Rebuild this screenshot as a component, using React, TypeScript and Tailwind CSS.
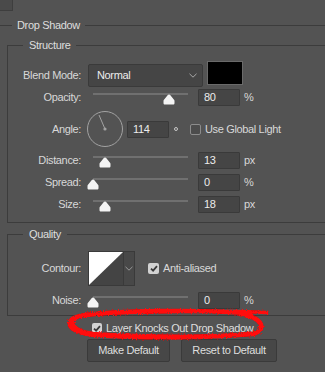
import React from 'react';

const LINE = 'border-[#3c3c3c]';

function Label({ children }: { children: React.ReactNode }) {
  return <div className="w-[73px] shrink-0 text-right text-[#d8d8d8]">{children}</div>;
}

function Slider({ pct }: { pct: number }) {
  // track runs 95px wide, thumb is 12px wide
  const left = 5 + (pct / 100) * 95 - 6;
  return (
    <div className="relative ml-[7px] h-full w-[105px] shrink-0">
      <div className="ml-[5px] mt-[7px] h-[2px] w-[95px] bg-[#707070]" />
      <svg
        className="absolute top-[8px]"
        style={{ left }}
        width="12"
        height="11"
        viewBox="0 0 12 11"
      >
        <path
          d="M6 0.5 C6.6 0.5 7 0.8 7.4 1.3 L11.2 6 C11.5 6.4 11.5 6.8 11.5 7.2 L11.5 9 C11.5 10 11 10.5 10 10.5 L2 10.5 C1 10.5 0.5 10 0.5 9 L0.5 7.2 C0.5 6.8 0.5 6.4 0.8 6 L4.6 1.3 C5 0.8 5.4 0.5 6 0.5 Z"
          fill="#f4f4f4"
        />
      </svg>
    </div>
  );
}

function NumBox({ value, className = '' }: { value: string; className?: string }) {
  return (
    <div
      className={`flex h-[17px] w-[42px] shrink-0 items-center rounded-[1px] border border-[#3a3a3a] bg-[#454545] pl-[5px] text-[#ececec] ${className}`}
    >
      {value}
    </div>
  );
}

function SliderRow({ label, pct, value, unit }: { label: string; pct: number; value: string; unit: string }) {
  return (
    <div className="flex h-[22px] items-center">
      <Label>{label}</Label>
      <Slider pct={pct} />
      <NumBox value={value} className="ml-[5px]" />
      <div className="ml-[4px] text-[#d8d8d8]">{unit}</div>
    </div>
  );
}

function Check({ checked, size = 10 }: { checked?: boolean; size?: number }) {
  if (checked) {
    return (
      <div
        className="flex shrink-0 items-center justify-center rounded-[2px] bg-[#d2d2d2]"
        style={{ width: size, height: size }}
      >
        <svg width="8" height="7" viewBox="0 0 8 7">
          <path d="M1 3.6 L3.1 5.6 L7 1.2" fill="none" stroke="#3a3a3a" strokeWidth="1.8" />
        </svg>
      </div>
    );
  }
  return (
    <div
      className="shrink-0 rounded-[2px] border border-[#8c8c8c] bg-[#4c4c4c]"
      style={{ width: size, height: size }}
    />
  );
}

function Legend({ children, className = '' }: { children: React.ReactNode; className?: string }) {
  return (
    <div className={`-mt-[8px] w-fit bg-[#535353] px-[5px] leading-[14px] text-[#dedede] ${className}`}>
      {children}
    </div>
  );
}

function Chevron({ color = '#a8a8a8' }: { color?: string }) {
  return (
    <svg width="8" height="5" viewBox="0 0 8 5">
      <path d="M0.5 0.8 L4 4.2 L7.5 0.8" fill="none" stroke={color} strokeWidth="1" />
    </svg>
  );
}

export default function App() {
  return (
    <div className="relative h-[372px] w-[325px] overflow-hidden bg-[#535353] font-['Liberation_Sans',Arial,sans-serif] text-[11px] tracking-[-0.35px]">
      {/* leftover list cell at the top edge */}
      <div className="h-[11px] w-[13px] border-b border-r border-[#3e3e3e] bg-[#4a4a4a]" />

      {/* Drop Shadow group */}
      <div className={`mt-[14px] border-t ${LINE}`}>
        <Legend className="ml-[12px]">Drop Shadow</Legend>

        {/* Structure */}
        <div className={`ml-[7px] mt-[13px] border-b border-l border-t pb-[7px] ${LINE}`}>
          <Legend className="ml-[15px] px-[6px]">Structure</Legend>

          <div className="mt-[12px] flex h-[22px] items-start">
            <div className="flex h-[22px] items-center">
              <Label>Blend Mode:</Label>
            </div>
            <div className="ml-[7px] flex h-[23px] w-[115px] items-center justify-between rounded-[2px] border border-[#3a3a3a] bg-[#454545] pl-[8px] pr-[5px] text-[#ececec]">
              <span>Normal</span>
              <Chevron />
            </div>
            <div className="-mt-[3px] ml-[4px] h-[24px] w-[36px] border border-[#6a6a6a] bg-black" />
          </div>

          <SliderRow label="Opacity:" pct={80} value="80" unit="%" />

          <div className="mt-[3px] flex h-[36px] items-center">
            <Label>Angle:</Label>
            <svg className="ml-[6px] shrink-0" width="36" height="36" viewBox="0 0 36 36">
              <circle cx="18" cy="18" r="17.5" fill="none" stroke="#a2a2a2" strokeWidth="1" />
              <line x1="18" y1="18" x2="12" y2="4" stroke="#a2a2a2" strokeWidth="1" />
              <circle cx="18" cy="18" r="1.6" fill="#a2a2a2" />
            </svg>
            <NumBox value="114" className="ml-[4px] w-[41px]" />
            <div className="ml-[5px] h-[4px] w-[4px] rounded-full border border-[#c8c8c8]" />
            <div className="ml-[12px]">
              <Check size={11} />
            </div>
            <div className="ml-[4px] text-[#d8d8d8]">Use Global Light</div>
          </div>

          <div className="mt-[2px]">
            <SliderRow label="Distance:" pct={13} value="13" unit="px" />
            <SliderRow label="Spread:" pct={0} value="0" unit="%" />
            <SliderRow label="Size:" pct={13} value="18" unit="px" />
          </div>
        </div>

        {/* Quality */}
        <div className={`ml-[7px] mt-[11px] border-b border-l border-t pb-[4px] ${LINE}`}>
          <Legend className="ml-[15px] px-[6px]">Quality</Legend>

          <div className="mt-[10px] flex h-[35px] items-center">
            <Label>Contour:</Label>
            <div className="ml-[7px] flex h-[35px] w-[47px] border border-[#3a3a3a] bg-[#444444]">
              <svg width="34" height="33" viewBox="0 0 34 33">
                <rect width="34" height="33" fill="#444444" />
                <path d="M0 0 H34 L0 33 Z" fill="#ffffff" />
              </svg>
              <div className="flex flex-1 items-center justify-center border-l border-[#3a3a3a] bg-[#484848]">
                <Chevron color="#9a9a9a" />
              </div>
            </div>
            <div className="ml-[13px]">
              <Check checked size={11} />
            </div>
            <div className="ml-[4px] text-[#d8d8d8]">Anti-aliased</div>
          </div>

          <div className="mt-[3px]">
            <SliderRow label="Noise:" pct={0} value="0" unit="%" />
          </div>
        </div>
      </div>

      <div className="mt-[1px] flex h-[22px] items-center pl-[92px]">
        <Check checked size={10} />
        <div className="ml-[4px] text-[#dedede]">Layer Knocks Out Drop Shadow</div>
      </div>

      <div className="flex gap-[11px] pl-[87px]">
        <button className="h-[23px] w-[83px] rounded-[2px] border border-[#3a3a3a] bg-[#474747] text-[#dedede]">
          Make Default
        </button>
        <button className="h-[23px] w-[96px] rounded-[2px] border border-[#3a3a3a] bg-[#474747] text-[#dedede]">
          Reset to Default
        </button>
      </div>

      {/* red marker scribble drawn over the dialog */}
      <svg className="pointer-events-none absolute inset-0" width="325" height="372" viewBox="0 0 325 372">
        <defs>
          <filter id="rough" x="-5%" y="-30%" width="110%" height="160%">
            <feTurbulence type="fractalNoise" baseFrequency="0.8" numOctaves="2" seed="5" />
            <feDisplacementMap in="SourceGraphic" scale="3.5" />
          </filter>
        </defs>
        <g fill="none" stroke="#ff0808" strokeLinecap="round" strokeLinejoin="round" filter="url(#rough)">
          <path
            strokeWidth="4.4"
            d="M250 313.5 C205 309.5 115 310 80 316 C63 320 66 332 95 335 C140 338.5 215 338 254 333.5 C266 330.5 265 318 240 314"
          />
          <path
            strokeWidth="3.6"
            d="M267 312.5 C228 310.5 130 311 86 314.5 C67 318 68 330 93 333.5 C150 337.5 218 336.5 252 334.5 C265 332 264 320 246 315"
          />
        </g>
      </svg>
    </div>
  );
}
